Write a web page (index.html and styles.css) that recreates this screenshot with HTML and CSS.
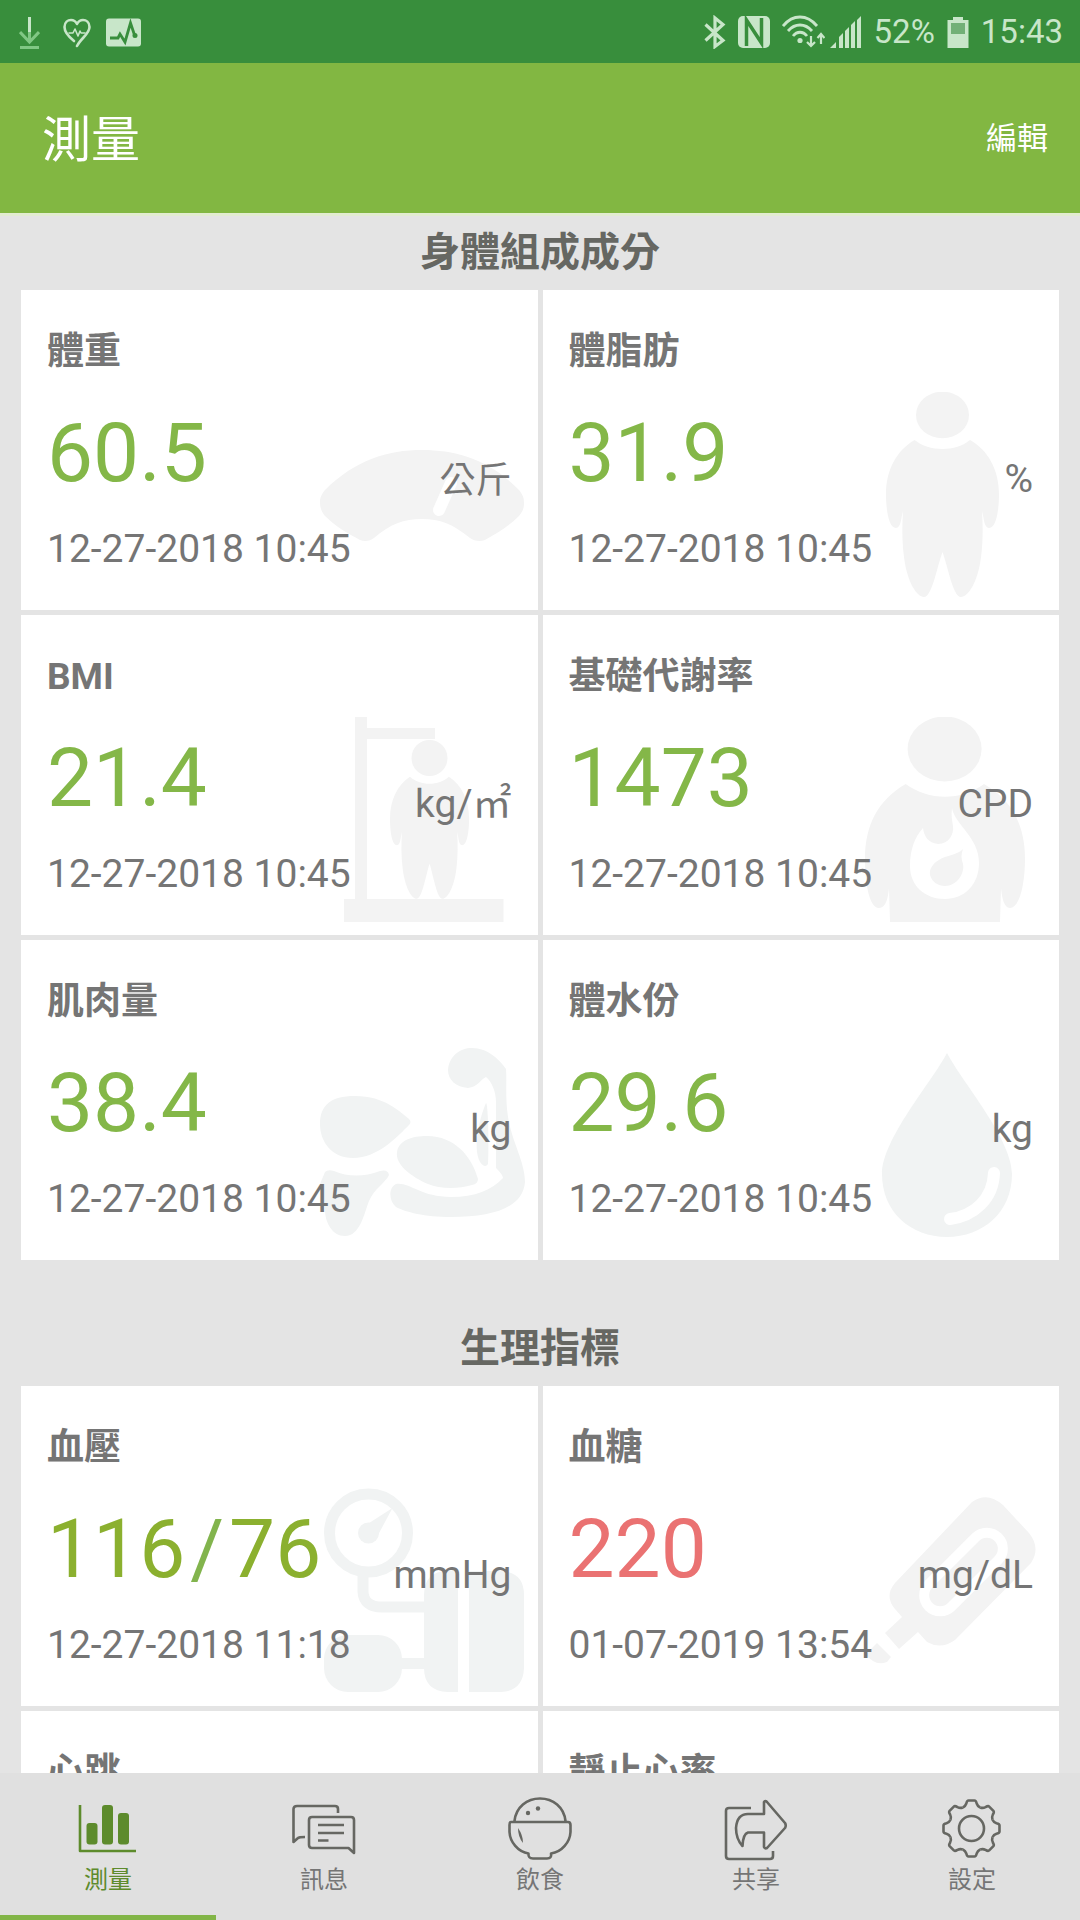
FILE: index.html
```html
<!DOCTYPE html>
<html lang="zh-Hant">
<head>
<meta charset="utf-8">
<meta name="viewport" content="width=device-width, initial-scale=1">
<title>測量</title>
<link rel="stylesheet" href="styles.css">
</head>
<body>
<svg class="defs" aria-hidden="true">
  <defs>
    <path id="torso" d="M73.600 48C56 58 45 78 45 102C45 115 47 136 55 136C60 136 60 126 62 119C61 135 61 150 63 165C66 190 76 205 83 205C91 205 96 175 101.500 160C107 175 112 205 120 205C127 205 137 190 140 165C142 150 142 135 141 119C143 126 143 136 148 136C156 136 158 115 158 102C158 78 147 58 129 48C115 60 88 60 73.600 48Z"/>
    <path id="tooth" d="M-8.700 -21C-6.500 -22 -6 -22.500 -5.200 -25Q-4.500 -28 -3 -28H3Q4.500 -28 5.200 -25C6 -22.500 6.500 -22 8.700 -21"/>
  </defs>
</svg>

<div class="status">
  <div class="status-group">
    <svg width="21" height="34" viewBox="0 0 21 34" fill="none" stroke="#81c784" stroke-width="3"><path d="M1 17l9.500 10L20 17M1 32.500h19M10.500 16v10"/><path d="M10.500 2v15" stroke="#c8e6c9"/></svg>
    <svg class="status-heart" width="28" height="34" viewBox="0 0 28 34" fill="none" stroke="#c8e6c9" stroke-width="2.600" stroke-linejoin="round" stroke-linecap="round"><path d="M11 26C6 22 1.500 17 1.500 12C1.500 7 5 5 8 5C11 5 13 7 14 9C15 7 17 5 20 5C23 5 26.500 7 26.500 12C26.500 19 18 23 14 31"/><path d="M6 18h4l2-4 3 7 2-5 1 2h4" stroke-width="1.600"/></svg>
    <svg width="35" height="34" viewBox="0 0 35 34"><rect y="3.500" width="35" height="28" rx="3" fill="#c8e6c9"/><path d="M4 23h8l2-4 5 8 5.500-19 4 12" fill="none" stroke="#388e3c" stroke-width="2.800"/><circle cx="29" cy="20.500" r="2.500" fill="#388e3c"/></svg>
  </div>
  <div class="status-group status-right">
    <svg width="22" height="34" viewBox="0 0 22 34" fill="none" stroke="#c8e6c9" stroke-width="3.200"><path d="M1.500 9.500L19 25.500L11 31.500V3L19 9.500L1.500 25.500"/></svg>
    <svg width="32" height="34" viewBox="0 0 32 34"><rect y="1" width="32" height="32" rx="5" fill="#c8e6c9"/><path d="M8.500 31V5L23.500 28V3" fill="none" stroke="#388e3c" stroke-width="3.500"/></svg>
    <svg class="status-wifi" width="43" height="34" viewBox="0 0 43 34" fill="none" stroke="#c8e6c9" stroke-width="2.800"><path d="M1 11C11-1 25-1 35 11M6 16C13 8 23 8 30 16M11 21C15 16 21 16 25 21"/><circle cx="18" cy="25.500" r="2.600" fill="#c8e6c9" stroke="none"/><path d="M29 21v10M25 27l4 4 4-4M39 29V19M35.500 23L39 19l3.500 4" stroke-width="2.200"/></svg>
    <svg width="32" height="34" viewBox="0 0 32 34" fill="#c8e6c9"><path d="M0 33l6-6v6zM9 22l4-4v15H9zM15 16l4-4v21h-4zM21 10l4-4v27h-4zM27 5l4-4v32h-4z"/></svg>
    <span class="status-text">52%</span>
    <svg width="22" height="34" viewBox="0 0 22 34"><path d="M6 2h10v3h5.500v28H.500V5H6z" fill="#c8e6c9"/><path d="M4 8h14v11H4z" fill="#72b077"/></svg>
    <span class="status-text">15:43</span>
  </div>
</div>

<header class="appbar">
  <h1 class="appbar-title">測量</h1>
  <button class="appbar-action" type="button">編輯</button>
</header>

<main class="content">
  <section class="section">
    <h2 class="section-title">身體組成成分</h2>
    <div class="cards">
      <article class="card">
        <svg class="card-art" viewBox="0 0 205 205" aria-hidden="true"><path d="M0 110C0 106 1 103 5 98C35 68 68 58 102 58C137 58 170 68 199 98C203 103 204 106 204 111C204 116 203 119 199 124C189 134 177 141 165 148C160 150 154 149 150 146C133 132 120 127 102 127C84 127 70 132 54 146C50 149 45 150 40 148C27 141 15 134 5 124C1 119 0 115 0 110Z"/><path class="cut" d="M119 118L131 91"/></svg>
        <h3 class="card-label">體重</h3>
        <p class="card-value">60.5</p>
        <p class="card-unit unit-cjk">公斤</p>
        <time class="card-time">12-27-2018 10:45</time>
      </article>
      <article class="card">
        <svg class="card-art" viewBox="0 0 205 205" aria-hidden="true"><ellipse cx="101.500" cy="23" rx="26.500" ry="23.300"/><use href="#torso"/></svg>
        <h3 class="card-label">體脂肪</h3>
        <p class="card-value">31.9</p>
        <p class="card-unit">%</p>
        <time class="card-time">12-27-2018 10:45</time>
      </article>
      <article class="card">
        <svg class="card-art" viewBox="0 0 205 205" aria-hidden="true"><path d="M35 0H47V11H115V22H47V182H183.500V205H24V182H35Z"/><circle cx="109.500" cy="41" r="18"/><use href="#torso" transform="translate(38.500 22.500) scale(.7 .777)"/></svg>
        <h3 class="card-label">BMI</h3>
        <p class="card-value">21.4</p>
        <p class="card-unit">kg/㎡</p>
        <time class="card-time">12-27-2018 10:45</time>
      </article>
      <article class="card">
        <svg class="card-art" viewBox="0 0 205 205" aria-hidden="true"><ellipse cx="103.600" cy="32" rx="37" ry="32.500"/><path d="M64.700 67C37 83 24 108 24 142C24 165 28 191 38 191C45 191 47 181 48 171L49 205H159L160 171C161 181 163 191 169 191C179 191 184 165 184 142C184 108 171 83 143 67C120 84 88 84 64.700 67Z"/><path class="hole" d="M111 91C114 108 138 120 138 146C138 168 123 182 104 182C84 182 69 169 69 149C69 132 74 120 82 111C83 119 87 126 97 127C108 127 113 117 112 109C111 103 110 98 111 91Z"/><path d="M122 132C117 138 105 138 98 143C91 147 88 153 89 158C91 165 97 169 104 169C116 169 124 156 122 147C120 142 120 137 122 132Z"/></svg>
        <h3 class="card-label">基礎代謝率</h3>
        <p class="card-value">1473</p>
        <p class="card-unit">CPD</p>
        <time class="card-time">12-27-2018 10:45</time>
      </article>
      <article class="card">
        <svg class="card-art cool" viewBox="0 0 205 205" aria-hidden="true"><path d="M0 82C0 64 10 54 35 54C65 54 80 70 89 77Q92 80 89 83C78 94 58 116 33 116C12 116 0 100 0 82Z"/><path d="M5 130Q8 127 14 129C28 135 44 135 60 129Q68 127 69 133C66 140 54 147 49 159C44 172 40 194 25 194C12 194 5 180 5 168C5 158 0 150 0 142Z"/><path d="M77 110C79 98 92 94 107 94C135 94 152 115 158 137Q158 142 152 143C138 147 120 147 108 142C92 135 75 123 77 110Z"/><path d="M128 28C129 14 140 6 152 6C168 6 180 18 186 27C187 40 185 55 188 75C192 100 205 120 205 140C203 165 175 175 131 175C105 175 85 170 76 165C68 158 69 145 76 142C90 140 100 155 131 155C155 155 172 148 183 136Q183 133 176 126V60C176 50 172 40 166 35C160 38 158 45 148 46C136 45 128 38 128 28Z"/><path d="M166 61C168 61 169 100 168 122Q165 127 160 120C152 105 160 75 166 61Z"/></svg>
        <h3 class="card-label">肌肉量</h3>
        <p class="card-value">38.4</p>
        <p class="card-unit">kg</p>
        <time class="card-time">12-27-2018 10:45</time>
      </article>
      <article class="card">
        <svg class="card-art cool" viewBox="0 0 205 205" aria-hidden="true"><path d="M106 11C121 40 171 97 171 132C171 170 142 195 106 195C70 195 41 170 41 132C41 97 91 40 106 11Z"/><path class="cut" d="M153 131C152 157 133 174 109 177"/></svg>
        <h3 class="card-label">體水份</h3>
        <p class="card-value">29.6</p>
        <p class="card-unit">kg</p>
        <time class="card-time">12-27-2018 10:45</time>
      </article>
    </div>
  </section>

  <section class="section">
    <h2 class="section-title">生理指標</h2>
    <div class="cards">
      <article class="card">
        <svg class="card-art cool" viewBox="0 0 205 205" aria-hidden="true"><circle class="line" cx="48.500" cy="45" r="39"/><circle cx="48.500" cy="45" r="10.500"/><path d="M46 37L72.500 20L58 47Z"/><path class="line" d="M43 88V104Q44 119 62 119H105"/><path d="M138 83V204H128Q104 203 104 180V107Q104 83 128 83ZM149 83H181Q204 84 204 107V180Q203 203 181 204H149Z"/><rect x="4" y="147" width="78" height="57" rx="24"/><path d="M80 170H105V181H80Z"/></svg>
        <h3 class="card-label">血壓</h3>
        <p class="card-value olive">116<span class="slash">/</span>76</p>
        <p class="card-unit">mmHg</p>
        <time class="card-time">12-27-2018 11:18</time>
      </article>
      <article class="card">
        <svg class="card-art" viewBox="0 0 205 205" aria-hidden="true"><path d="M131 14L54 95Q43 108 54 121L61 129L44 145L58 161L77 144L86 154Q100 162 114 152L190 75Q200 60 188 45L162 17Q146 3 131 14Z"/><rect class="slot" x="-49" y="-16" width="98" height="32" rx="16" transform="translate(122.500 84) rotate(-45)"/><path d="M36 155L50 169L46 174Q38 177 32 173L24 167Z"/></svg>
        <h3 class="card-label">血糖</h3>
        <p class="card-value alert">220</p>
        <p class="card-unit">mg/dL</p>
        <time class="card-time">01-07-2019 13:54</time>
      </article>
      <article class="card">
        <h3 class="card-label">心跳</h3>
      </article>
      <article class="card">
        <h3 class="card-label">靜止心率</h3>
      </article>
    </div>
  </section>
</main>

<nav class="tabs">
  <button class="tab active" type="button">
    <svg class="tab-icon" viewBox="0 0 64 64" aria-hidden="true"><path d="M4 8V54H60"/><g fill="currentColor" stroke="none"><rect x="10.500" y="26" width="11" height="21.500" rx="3"/><rect x="26" y="8" width="11" height="39.500" rx="3"/><rect x="42" y="16" width="11" height="31.500" rx="3"/></g></svg>
    <span>測量</span>
  </button>
  <button class="tab" type="button">
    <svg class="tab-icon" viewBox="0 0 64 64" aria-hidden="true"><path d="M46 16V12Q46 9 43 9H5Q1.500 9 1.500 12V45L6 41Q7 40 13 40M20 20H59Q62 20 62 23V56L56.500 51H20Q17 51 17 48V23Q17 20 20 20ZM26 28H52M26 36H52M26 43.500H36.500"/></svg>
    <span>訊息</span>
  </button>
  <button class="tab" type="button">
    <svg class="tab-icon" viewBox="0 0 64 64" aria-hidden="true"><path d="M6.500 24C8 10 19 1.500 32 1.500C45 1.500 56 10 57.500 24M3 25H60Q62.500 25 62.500 28V35C62 45 54 55 43 56.500Q44 61.500 39 61.500H25Q20 61.500 20.500 56.500C10 55 2 45 1.500 35V28Q1.500 25 3 25Z"/><g fill="currentColor" stroke="none"><circle cx="20" cy="16" r="2.200"/><circle cx="30" cy="11.500" r="2.200"/><path d="M10 31Q15 38 15 46Q10 40 10 31Z"/></g></svg>
    <span>飲食</span>
  </button>
  <button class="tab" type="button">
    <svg class="tab-icon" viewBox="0 0 64 64" aria-hidden="true"><path d="M27 11H5Q2 11 2 14V59Q2 62 5 62H46Q49 62 49 59V54M40 17V5Q41 3 43 5L61 26Q62.500 28.500 61 31L43 51Q41 52 40 50V35.500H24Q19 37 18.500 49Q12 42 12 31Q13 17 24 17Z"/></svg>
    <span>共享</span>
  </button>
  <button class="tab" type="button">
    <svg class="tab-icon" viewBox="0 0 64 64" aria-hidden="true"><g transform="translate(31.500 31.500)"><use href="#tooth"/><use href="#tooth" transform="rotate(45)"/><use href="#tooth" transform="rotate(90)"/><use href="#tooth" transform="rotate(135)"/><use href="#tooth" transform="rotate(180)"/><use href="#tooth" transform="rotate(225)"/><use href="#tooth" transform="rotate(270)"/><use href="#tooth" transform="rotate(315)"/><circle r="12.500"/></g></svg>
    <span>設定</span>
  </button>
</nav>
</body>
</html>
```

FILE: styles.css
```css
* {
  box-sizing: border-box;
}

body {
  margin: 0;
  height: 100vh;
  display: flex;
  flex-direction: column;
  background: #e4e4e4;
  color: #757575;
  font-family: Roboto, "Noto Sans CJK TC", sans-serif;
}

h1, h2, h3, p {
  margin: 0;
}

button {
  margin: 0;
  padding: 0;
  border: 0;
  background: none;
  font-family: inherit;
  cursor: pointer;
}

.defs {
  position: absolute;
  width: 0;
  height: 0;
}

/* System status bar */
.status {
  flex: none;
  display: flex;
  justify-content: space-between;
  align-items: center;
  height: 63px;
  padding: 0 17px 0 19px;
  background: #388e3c;
}

.status-group {
  display: flex;
  align-items: center;
}

.status-heart {
  margin: 0 15px 0 23px;
}

.status-right {
  gap: 12px;
}

.status-wifi {
  margin-right: -7px;
}

.status-text {
  color: #c8e6c9;
  font-size: 33px;
  line-height: 40px;
}

/* Title bar */
.appbar {
  flex: none;
  position: relative;
  z-index: 1;
  display: flex;
  justify-content: space-between;
  align-items: center;
  height: 150px;
  padding: 0 32px 0 42px;
  background: #82b742;
  box-shadow: 0 3px 0 #e2ecd0;
  color: #fff;
}

.appbar-title {
  padding-top: 6px;
  font-size: 49px;
  line-height: 64px;
  font-weight: 400;
}

.appbar-action {
  padding-top: 2px;
  color: #fff;
  font-size: 31px;
  line-height: 48px;
}

/* Scrolling measurements */
.content {
  flex: 1;
  min-height: 0;
  overflow-y: auto;
  scrollbar-width: none;
}

.section + .section {
  margin-top: 49px;
}

.section-title {
  padding-top: 3px;
  color: #666762;
  font-size: 40px;
  line-height: 74px;
  font-weight: 700;
  text-align: center;
}

.cards {
  display: grid;
  grid-template-columns: 1fr 1fr;
  gap: 5px;
  padding: 0 21px;
}

.card {
  position: relative;
  isolation: isolate;
  display: grid;
  grid-template-columns: 1fr auto;
  align-content: start;
  min-height: 320px;
  padding: 38px 26px 36px;
  background: #fff;
}

.card-art {
  position: absolute;
  z-index: -1;
  right: 13px;
  bottom: 13px;
  width: 205px;
  height: 205px;
  fill: #f3f3f3;
  stroke: none;
}

.card-art.cool {
  fill: #f1f3f3;
}

.card-art .cut {
  fill: none;
  stroke: #fff;
  stroke-width: 12px;
  stroke-linecap: round;
}

.card-art .hole {
  fill: #fff;
}

.card-art .slot {
  fill: none;
  stroke: #fff;
  stroke-width: 10px;
}

.card-art .line {
  fill: none;
  stroke: #f1f3f3;
  stroke-width: 11px;
}

.card-label {
  grid-column: 1 / -1;
  font-size: 37px;
  line-height: 48px;
  font-weight: 700;
}

.card-value {
  margin: 27px 0 22px;
  color: #84b748;
  font-size: 82px;
  line-height: 100px;
}

.card-value.olive {
  color: #8bb02f;
}

.card-value.alert {
  color: #ea7272;
}

.slash {
  margin: 0 5px;
  color: #82b44d;
}

.card-unit {
  align-self: end;
  margin-bottom: 22px;
  font-size: 39px;
  line-height: 48px;
}

.card-unit.unit-cjk {
  font-size: 36px;
  line-height: 44px;
}

.card-time {
  grid-column: 1 / -1;
  font-size: 39px;
  line-height: 48px;
}

/* Bottom tabs */
.tabs {
  flex: none;
  display: flex;
  background: #e0e0e0;
}

.tab {
  flex: 1;
  display: flex;
  flex-direction: column;
  align-items: center;
  gap: 3px;
  padding: 24px 0 19px;
  border-bottom: 5px solid transparent;
  color: #757575;
  font-size: 24px;
  line-height: 32px;
}

.tab.active {
  border-bottom-color: #82b547;
  color: #5d8b2c;
}

.tab-icon {
  width: 64px;
  height: 64px;
  color: #666762;
  fill: none;
  stroke: currentColor;
  stroke-width: 2.6px;
  stroke-linejoin: round;
}

.active .tab-icon {
  color: inherit;
}
```
